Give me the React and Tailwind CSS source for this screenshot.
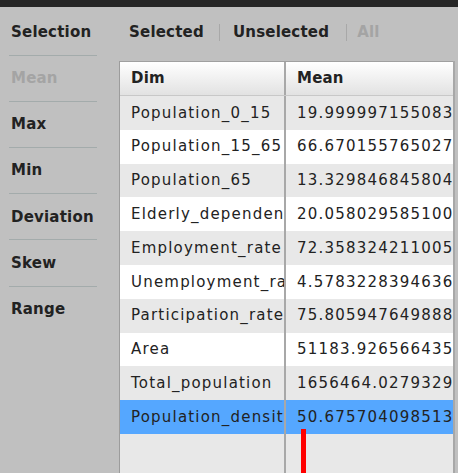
import React from "react";

const rows = [
  ["Population_0_15", "19.999997155083"],
  ["Population_15_65", "66.670155765027"],
  ["Population_65", "13.329846845804"],
  ["Elderly_dependency", "20.058029585100"],
  ["Employment_rate", "72.358324211005"],
  ["Unemployment_rate", "4.5783228394636"],
  ["Participation_rate", "75.805947649888"],
  ["Area", "51183.926566435"],
  ["Total_population", "1656464.0279329"],
  ["Population_density", "50.675704098513"],
];

const side = ["Selection", "Mean", "Max", "Min", "Deviation", "Skew", "Range"];

export default function App() {
  return (
    <div
      className="w-[458px] h-[473px] bg-[#c0c0c0] overflow-hidden flex flex-col"
      style={{ fontFamily: '"DejaVu Sans", Verdana, sans-serif' }}
    >
      <div className="h-[7px] bg-[#262626] shrink-0" />
      <div className="flex flex-1 min-h-0">
        <div className="w-[119px] shrink-0 pl-[9px] pt-[15px]">
          {side.map((s, i) => (
            <div key={s}>
              <div
                className={
                  "h-[20px] pl-[2px] flex items-center text-[15px] tracking-[0.2px] font-bold " +
                  (s === "Mean" ? "text-[#a4a4a4]" : "text-[#222]")
                }
              >
                {s}
              </div>
              {i < side.length - 1 && (
                <div className="w-[88px] h-[1px] bg-[#a3abab] my-[12.6px]" />
              )}
            </div>
          ))}
        </div>
        <div className="flex-1 flex flex-col min-w-0">
          <div className="h-[54px] shrink-0 flex items-start pt-[15px] pl-[10px] text-[15px] tracking-[0.2px] font-bold">
            <span className="text-[#222] h-[20px] flex items-center">Selected</span>
            <span className="w-[1px] h-[17px] bg-[#a8a8a8] ml-[15px] mr-[13px] mt-[2px]" />
            <span className="text-[#222] h-[20px] flex items-center">Unselected</span>
            <span className="w-[1px] h-[17px] bg-[#a8a8a8] ml-[17px] mr-[10px] mt-[2px]" />
            <span className="text-[#a4a4a4] h-[20px] flex items-center">All</span>
          </div>
          <div className="flex-1 flex min-h-0 border-l-[1px] border-[#9c9c9c]">
            <div className="w-[333px] shrink-0 flex flex-col bg-[#e8e8e8] border-t border-[#a0a0a0] relative">
              <div className="h-[34px] shrink-0 flex bg-gradient-to-b from-white to-[#e2e2e2] text-[15px] tracking-[0.2px] font-bold text-[#222] border-b border-[#c8c8c8]">
                <div className="w-[166px] border-r-2 border-[#a8a8a8] pl-[11px] flex items-center">Dim</div>
                <div className="flex-1 pl-[11px] flex items-center">Mean</div>
              </div>
              {rows.map(([d, m], i) => (
                <div
                  key={d}
                  className={
                    "h-[33.8px] shrink-0 flex text-[15px] tracking-[1.2px] text-[#222] " +
                    (i === 9 ? "bg-[#55a7ff]" : i % 2 === 0 ? "bg-[#e8e8e8]" : "bg-white")
                  }
                >
                  <div className="w-[166px] border-r-2 border-[#a8a8a8] pl-[11px] flex items-center overflow-hidden whitespace-nowrap">
                    {d}
                  </div>
                  <div className="flex-1 pl-[11px] flex items-center overflow-hidden whitespace-nowrap">{m}</div>
                </div>
              ))}
              <div className="flex-1 flex">
                <div className="w-[166px] border-r-2 border-[#a8a8a8]" />
                <div className="flex-1" />
              </div>
              <div className="absolute left-[181px] top-[367px] w-[5px] h-[60px] bg-[#ff0000]" />
            </div>
            <div className="w-[2px] bg-[#a8a8a8]" />
          </div>
        </div>
      </div>
    </div>
  );
}
